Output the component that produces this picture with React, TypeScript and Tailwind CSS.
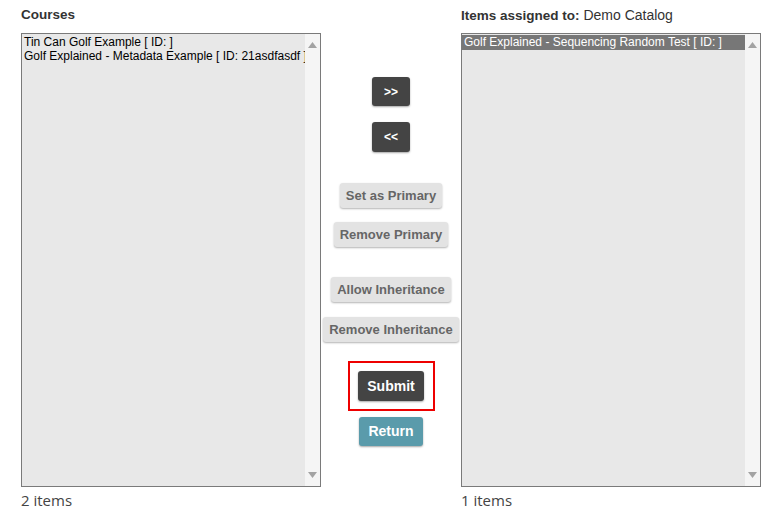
import React from "react";

type ListProps = {
  items: string[];
  selected?: number;
};

function FakeList({ items, selected }: ListProps) {
  return (
    <div className="flex h-[454px] w-[300px] border border-[#7a7a7a] bg-[#e8e8e8]">
      <div className="flex-1 overflow-hidden pt-px">
        {items.map((item, i) => (
          <div
            key={item}
            className={
              i === selected
                ? "whitespace-nowrap bg-[#777777] px-[2px] text-[12px] leading-[15px] text-white"
                : "whitespace-nowrap px-[2px] text-[12px] leading-[14px] text-black"
            }
          >
            {item}
          </div>
        ))}
      </div>
      <div className="flex w-[15px] flex-col items-center justify-between bg-[#f5f5f5] py-[8px]">
        <svg width="9" height="6" viewBox="0 0 9 6">
          <path d="M4.5 0 L9 6 L0 6 Z" fill="#a3a3a3" />
        </svg>
        <svg width="9" height="6" viewBox="0 0 9 6">
          <path d="M0 0 L9 0 L4.5 6 Z" fill="#a3a3a3" />
        </svg>
      </div>
    </div>
  );
}

const darkBtn =
  "rounded-[3px] bg-[#444444] text-white font-bold shadow-[0_1px_2px_rgba(0,0,0,0.35)]";
const grayBtn =
  "whitespace-nowrap rounded-[3px] bg-[#e3e3e3] px-0 h-[25px] text-[13px] font-bold text-[#666666] shadow-[0_1px_2px_rgba(0,0,0,0.3)]";

export default function App() {
  return (
    <div
      className="h-[511px] w-[777px] bg-white pl-[21px]"
      style={{ fontFamily: '"Liberation Sans", Arial, sans-serif' }}
    >
      <div className="flex">
        <div className="flex w-[300px] flex-col">
          <div className="h-[33px] pt-[5px] text-[13.5px] font-bold text-[#333333]">
            Courses
          </div>
          <FakeList
            items={[
              "Tin Can Golf Example [ ID: ]",
              "Golf Explained - Metadata Example [ ID: 21asdfasdf ]",
            ]}
          />
          <div
            className="pt-[2px] text-[15px] text-[#444444]"
            style={{ fontFamily: '"Open Sans", sans-serif' }}
          >
            2 items
          </div>
        </div>

        <div className="flex w-[140px] flex-col items-center pt-[77px]">
          <button className={`${darkBtn} h-[29px] w-[38px] text-[12px]`}>
            &gt;&gt;
          </button>
          <button className={`${darkBtn} mt-[16px] h-[30px] w-[38px] text-[12px]`}>
            &lt;&lt;
          </button>
          <button className={`${grayBtn} mt-[31px] w-[102px]`}>Set as Primary</button>
          <button className={`${grayBtn} mt-[14px] w-[114px]`}>Remove Primary</button>
          <button className={`${grayBtn} mt-[30px] w-[120px]`}>Allow Inheritance</button>
          <button className={`${grayBtn} mt-[15px] w-[136px]`}>Remove Inheritance</button>
          <div className="mt-[19px] flex h-[50px] w-[87px] items-center justify-center border-2 border-[#ee0000]">
            <button className={`${darkBtn} h-[30px] w-[66px] text-[14px]`}>Submit</button>
          </div>
          <button
            className="mt-[6px] h-[29px] w-[64px] rounded-[3px] bg-[#5a9bab] text-[14px] font-bold text-white shadow-[0_1px_2px_rgba(0,0,0,0.35)]"
          >
            Return
          </button>
        </div>

        <div className="flex w-[300px] flex-col">
          <div className="h-[33px] pt-[5px] text-[14px] text-[#333333]">
            <span className="text-[13.5px] font-bold">Items assigned to:</span> Demo Catalog
          </div>
          <FakeList
            items={["Golf Explained - Sequencing Random Test [ ID: ]"]}
            selected={0}
          />
          <div
            className="pt-[2px] text-[15px] text-[#444444]"
            style={{ fontFamily: '"Open Sans", sans-serif' }}
          >
            1 items
          </div>
        </div>
      </div>
    </div>
  );
}
